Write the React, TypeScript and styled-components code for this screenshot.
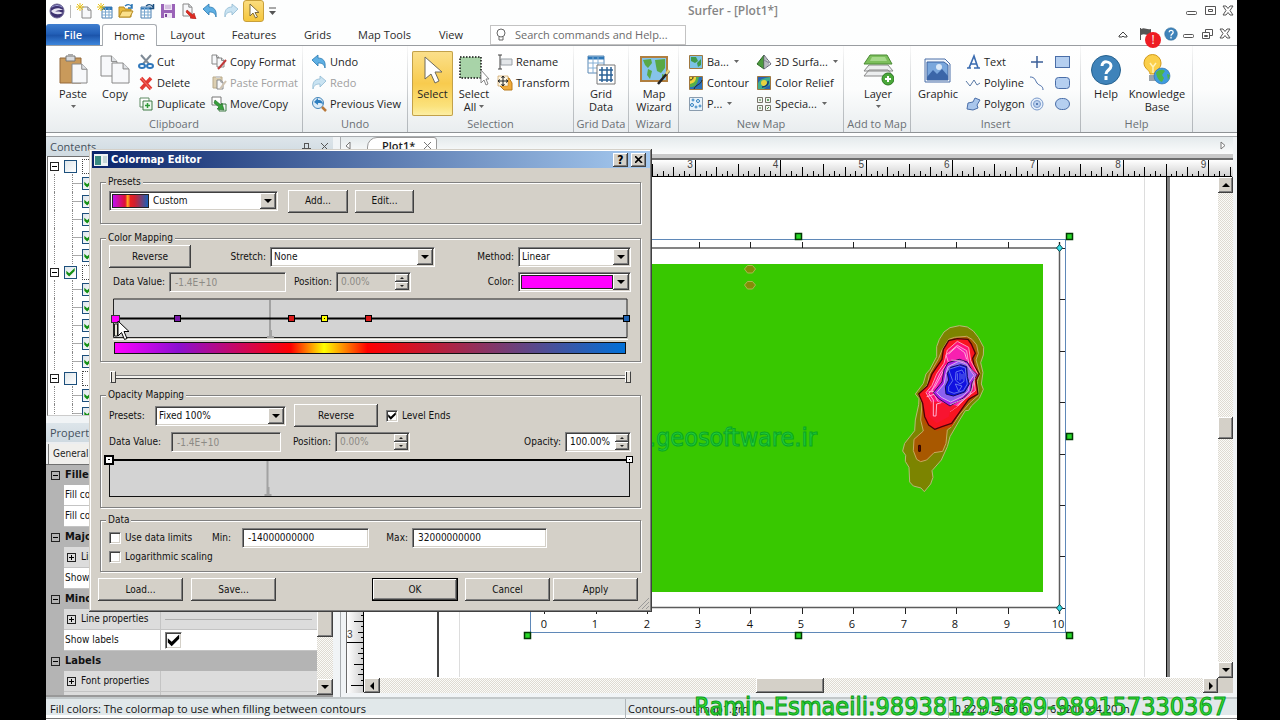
import React from "react";
import styled, { createGlobalStyle, css } from "styled-components";

const UI = '"Open Sans", "Noto Sans", sans-serif';
const DLG = '"DejaVu Sans Condensed", "DejaVu Sans", sans-serif';

const Global = createGlobalStyle`
  * { box-sizing: border-box; }
  html, body { margin: 0; background: #000; }
  body { font: 11px/14px ${UI}; color: #1e1e1e; overflow-x: hidden; }
  button, input, select { font: inherit; color: inherit; margin: 0; padding: 0; border: 0; background: none; border-radius: 0; outline: 0; }
  svg { display: block; flex: none; }
`;

/* ---------- window shell ---------- */
const Screen = styled.div`
  position: relative;
  min-height: 100vh;
  padding: 0 43px 0 46px;
  background: #000;
  display: flex;
  overflow: hidden;
`;
const Window = styled.main`
  flex: 1;
  min-width: 0;
  display: flex;
  flex-direction: column;
  background: #fdfefe;
`;
const TitleBar = styled.header`
  height: 22px;
  display: grid;
  grid-template-columns: 1fr auto 1fr;
  align-items: center;
  padding: 0 1px 0 0;
`;
const QuickBar = styled.div`
  display: flex;
  align-items: center;
`;
const QuickButton = styled.button<{ $on?: boolean }>`
  width: 21px;
  height: 22px;
  display: grid;
  place-items: center;
  ${(p) => p.$on && css`background: linear-gradient(#fbdc7e, #f5c63c); border: 1px solid #c9a03a; border-radius: 3px; margin-left: 2px;`}
`;
const Divider = styled.span`
  width: 1px;
  height: 13px;
  background: #b8b8b8;
  margin: 0 2px 0 3px;
`;
const Title = styled.h1`
  margin: 0 0 0 184px;
  font-size: 12px;
  font-weight: 600;
  color: #858585;
  line-height: 22px;
`;
const Controls = styled.div`
  display: flex;
  justify-content: flex-end;
  align-items: center;
  gap: 2px;
`;
const GlyphButton = styled.button`
  width: 16px;
  height: 18px;
  display: grid;
  place-items: center;
`;
const TabRow = styled.nav`
  height: 24px;
  display: flex;
  align-items: flex-end;
  border-bottom: 1px solid #9a9da1;
`;
const FileTab = styled.button`
  width: 54px;
  height: 21px;
  background: linear-gradient(#3f7fd0, #2360b8 45%, #1c55ab 55%, #3d86dc);
  border-radius: 3px 3px 0 0;
  color: #fff;
  font-weight: 600;
`;
const Tab = styled.button<{ $on?: boolean; $w: number }>`
  width: ${(p) => p.$w}px;
  height: 21px;
  color: #2a2a2a;
  ${(p) => p.$on && css`background: #fff; border: 1px solid #a9adb2; border-bottom: 0; border-radius: 3px 3px 0 0; height: 22px; margin: 0 0 -1px 2px;`}
`;
const SearchBox = styled.label`
  width: 196px;
  height: 20px;
  margin-left: 12px;
  display: flex;
  align-items: center;
  gap: 8px;
  padding-left: 4px;
  border: 1px solid #c3c3c3;
  background: #fff;
  input { width: 160px; color: #6b6b6b; }
  input::placeholder { color: #6b6b6b; opacity: 1; }
`;
const TabControls = styled(Controls)`
  flex: 1;
  height: 22px;
  padding-right: 4px;
`;
const FlagWrap = styled.span`
  position: relative;
  width: 28px;
  height: 18px;
  padding: 2px 0 0 6px;
`;
const Alert = styled.span`
  position: absolute;
  left: 12px;
  top: 7px;
  width: 16px;
  height: 16px;
  border-radius: 8px;
  background: #ee1c23;
  color: #fff;
  text-align: center;
  font-size: 12px;
  line-height: 16px;
  z-index: 2;
`;

/* ---------- ribbon ---------- */
const Ribbon = styled.section`
  height: 87px;
  display: flex;
  background: linear-gradient(#fff 0%, #fcfdfd 50%, #e9edef 100%);
  border-bottom: 1px solid #8f9396;
`;
const Group = styled.div<{ $w: number }>`
  width: ${(p) => p.$w}px;
  flex: none;
  display: flex;
  flex-direction: column;
  padding-top: 5px;
  border-right: 1px solid;
  border-image: linear-gradient(#fafafa, #c4c8cb 60%, #b0b5b9) 1;
`;
const GroupBody = styled.div<{ $pad?: number }>`
  height: 65px;
  display: flex;
  padding-left: ${(p) => p.$pad ?? 4}px;
`;
const GroupName = styled.div`
  text-align: center;
  line-height: 16px;
  color: #6a6f74;
  white-space: nowrap;
`;
const BigButton = styled.button<{ $w: number; $on?: boolean }>`
  width: ${(p) => p.$w}px;
  flex: none;
  height: 65px;
  display: flex;
  flex-direction: column;
  align-items: center;
  padding-top: 3px;
  line-height: 13px;
  svg.big { margin-bottom: 1px; }
  ${(p) => p.$on && css`background: linear-gradient(#fbe08c, #f8cb4e 50%, #fbe27c 85%, #fdf0a8); box-shadow: inset 0 0 0 1px #c2a14a; border-radius: 2px;`}
`;
const BigLabel = styled.span`
  display: flex;
  align-items: center;
  justify-content: center;
  gap: 3px;
  white-space: nowrap;
  min-height: 13px;
`;
const Stack = styled.div<{ $w: number; $pad?: number }>`
  width: ${(p) => p.$w}px;
  flex: none;
  display: flex;
  flex-direction: column;
  padding-left: ${(p) => p.$pad ?? 0}px;
`;
const SmallButton = styled.button<{ $off?: boolean }>`
  height: 21px;
  display: flex;
  align-items: center;
  gap: 3px;
  white-space: nowrap;
  color: ${(p) => (p.$off ? "#a0a0a0" : "#1e1e1e")};
  svg.caret { margin-left: 2px; }
`;

/* ---------- body ---------- */
const Body = styled.div`
  flex: 1;
  display: flex;
  gap: 7px;
  margin-top: 3px;
  border-top: 1px solid #a9adb0;
  background: #f1f4f6;
`;
const Dock = styled.aside`
  width: 287px;
  flex: none;
  display: flex;
  flex-direction: column;
`;
const DockHeader = styled.h2`
  margin: 0;
  height: 19px;
  flex: none;
  padding: 0 4px;
  display: flex;
  align-items: center;
  gap: 10px;
  font-size: 11px;
  font-weight: 400;
  color: #45505c;
  background: linear-gradient(#dde5ea, #cfdae1);
  span { flex: 1; }
`;
const Tree = styled.ul`
  flex: 1 0 200px;
  height: 200px;
  margin: 0 0 7px 1px;
  padding: 1px 0 0;
  list-style: none;
  background: #fff;
  border: 1px solid #707070;
  border-bottom-color: #ccc;
  overflow: hidden;
`;
const Parent = styled.li`
  height: 16px;
  display: flex;
  align-items: center;
  padding-left: 2px;
  gap: 5px;
`;
const Child = styled.li`
  height: 18px;
  display: flex;
  align-items: center;
  margin-left: 6px;
  padding-left: 17px;
  border-left: 1px dotted #888;
`;
const Branch = styled.span`
  width: 10px;
  height: 18px;
  border-left: 1px dotted #888;
  background: linear-gradient(#aaa, #aaa) 0 9px / 100% 1px no-repeat;
`;
const Expander = styled.button<{ $plus?: boolean }>`
  width: 9px;
  height: 9px;
  flex: none;
  border: 1px solid #222;
  background:
    linear-gradient(#000, #000) center / 5px 1px no-repeat,
    ${(p) => (p.$plus ? "linear-gradient(#000,#000) center / 1px 5px no-repeat," : "")}
    linear-gradient(transparent, transparent);
`;
const check = css`
  &:checked::after {
    content: "";
    display: block;
    width: 100%;
    height: 100%;
    background: currentColor;
    clip-path: polygon(12% 38%, 38% 62%, 88% 14%, 88% 42%, 38% 92%, 12% 66%);
  }
`;
const TreeCheck = styled.input`
  appearance: none;
  width: 13px;
  height: 13px;
  flex: none;
  border: 1px solid #1c4f7c;
  background: linear-gradient(135deg, #dfe6ea, #fff);
  color: #159015;
  ${check}
`;
const TreeName = styled.span`
  border: 1px dotted #444;
  height: 15px;
  line-height: 12px;
  padding: 0 10px;
  font-family: ${DLG};
  font-size: 10px;
`;
const PropTabs = styled.div`
  height: 22px;
  flex: none;
  display: flex;
  padding: 2px 0 0 2px;
  background: #eceef0;
  font: 10px/18px ${DLG};
  button { padding: 0 4px; background: #f0efec; border-left: 1px solid #777; border-right: 1px solid #777; }
`;
const PropFrame = styled.div`
  display: flex;
  flex: none;
  height: 233px;
  border-top: 1px solid #707070;
  border-bottom: 2px solid #999;
  font: 10px/14px ${DLG};
  color: #111;
`;
const PropGrid = styled.div`
  flex: 1;
  overflow: hidden;
  background: #b4b4b4;
`;
const PropHead = styled.div`
  height: 20px;
  display: flex;
  align-items: center;
  gap: 5px;
  padding-left: 5px;
  font-weight: 700;
  font-size: 11px;
`;
const PropRow = styled.div<{ $sub?: boolean }>`
  height: 21px;
  margin-left: 18px;
  display: grid;
  grid-template-columns: 97px 1fr;
  background: ${(p) => (p.$sub ? "#dcdcdc" : "#fff")};
  border-bottom: 1px solid #c4c4c4;
`;
const PropName = styled.label<{ $sub?: boolean }>`
  display: flex;
  align-items: center;
  gap: 5px;
  padding-left: ${(p) => (p.$sub ? 3 : 1)}px;
  border-right: 1px solid #c4c4c4;
  white-space: nowrap;
`;
const PropValue = styled.div`
  display: flex;
  align-items: center;
  padding-left: 4px;
  hr { width: 97%; margin: 0; border: 0; border-top: 1px solid #b0b0b0; }
`;
const dither = css`background: repeating-conic-gradient(#dedad2 0 25%, #fbfbf8 0 50%) 0 0 / 2px 2px;`;
const raised = css`
  background: #d4d0c8;
  box-shadow: inset -1px -1px #404040, inset 1px 1px #fff, inset -2px -2px #808080;
`;
const ScrollV = styled.div`
  width: 16px;
  flex: none;
  display: flex;
  flex-direction: column;
  ${dither}
`;
const CanvasScrollV = styled(ScrollV)`
  width: 15px;
`;
const ScrollH = styled.div`
  height: 15px;
  display: flex;
  ${dither}
`;
const Spacer = styled.span<{ $n: number }>`
  flex: ${(p) => p.$n} 1 0;
`;
const ScrollButton = styled.button<{ $w?: number; $h?: number }>`
  width: ${(p) => p.$w ?? 16}px;
  height: ${(p) => p.$h ?? 16}px;
  flex: none;
  display: grid;
  place-items: center;
  ${raised}
`;

/* ---------- document ---------- */
const Doc = styled.section`
  flex: 1;
  min-width: 0;
  display: flex;
  flex-direction: column;
  padding-right: 4px;
  border-left: 1px solid #a9adb0;
`;
const DocTabs = styled.div`
  height: 17px;
  display: flex;
  align-items: center;
  justify-content: space-between;
  padding: 0 6px 0 4px;
  background: linear-gradient(#e4eaec, #fbfcfc);
`;
const DocTab = styled.button`
  height: 17px;
  width: 70px;
  margin-left: 16px;
  padding: 0 5px 0 14px;
  display: flex;
  align-items: center;
  justify-content: space-between;
  border: 1px solid #999;
  border-radius: 10px 3px 0 0;
  background: #fff;
  font-weight: 600;
  line-height: 17px;
`;
const TabSide = styled.div`
  display: flex;
  align-items: center;
`;
const Canvas = styled.div`
  flex: 1;
  display: grid;
  grid-template-columns: 17px minmax(0, 1fr) 15px;
  grid-template-rows: 17px minmax(0, 1fr) 15px;
  margin: 4px 0 4px 5px;
  border-top: 2px solid #6c6c6c;
  border-left: 1px solid #6c6c6c;
  box-shadow: 0 -4px #c9c9c9;
`;
const Clip = styled.div<{ $wide?: boolean }>`
  overflow: hidden;
  background: #fff;
  ${(p) => p.$wide && css`grid-column: 2 / 4; background: linear-gradient(#fff, #cfcfcf);`}
`;
const VRuler = styled.div`
  grid-row: 2 / 4;
  overflow: hidden;
  background: linear-gradient(90deg, #fff, #cfcfcf);
`;
const Corner = styled.span`
  background: #d4d0c8;
`;

/* ---------- status ---------- */
const Status = styled.footer`
  height: 23px;
  flex: none;
  display: flex;
  border-top: 2px solid #c2c8ca;
  border-bottom: 1px solid #fff;
  box-shadow: inset 0 -1px #777, inset 0 -4px #fff;
  background: #e1e8ea;
  font-size: 11px;
  line-height: 19px;
  padding: 0 4px;
  color: #111;
`;
const Pane = styled.span<{ $w?: number }>`
  ${(p) => (p.$w ? css`width: ${p.$w}px; border-left: 1px solid #b0b6ba; padding-left: 2px;` : css`flex: 1;`)}
  white-space: nowrap;
`;
const Caption = styled.p`
  position: absolute;
  right: 53px;
  bottom: 0;
  margin: 0;
  font: 25px/26px ${DLG};
  color: #35e135;
  -webkit-text-stroke: 1px #0c9a1c;
  white-space: nowrap;
  z-index: 5;
`;

/* ---------- dialog ---------- */
const Dialog = styled.section`
  position: absolute;
  left: 89px;
  top: 149px;
  width: 563px;
  padding: 2px;
  background: #d4d0c8;
  box-shadow: inset -1px -1px #404040, inset 1px 1px #d4d0c8, inset -2px -2px #808080, inset 2px 2px #fff;
  font: 10px/14px ${DLG};
  color: #111;
  z-index: 4;
`;
const DialogTitle = styled.header`
  height: 17px;
  margin: 0 0 0 1px;
  display: flex;
  align-items: center;
  gap: 3px;
  padding: 0 4px 0 2px;
  background: linear-gradient(90deg, #0a246a, #a6caf0);
  color: #fff;
  h2 { flex: 1; margin: 0; font-size: 11px; font-weight: 700; }
`;
const CaptionButton = styled.button`
  width: 15px;
  height: 14px;
  color: #000;
  font-weight: 700;
  font-size: 12px;
  line-height: 14px;
  display: grid;
  place-items: center;
  ${raised}
`;
const DialogBody = styled.div`
  display: flex;
  flex-direction: column;
  padding: 7px 9px 0 9px;
`;
const Box = styled.fieldset<{ $h: number; $mt?: number }>`
  min-width: 0;
  margin: ${(p) => p.$mt ?? 0}px 0 0;
  height: ${(p) => p.$h}px;
  padding: 0 9px 0 8px;
  border: 1px solid #808080;
  box-shadow: 1px 1px #fff, inset 1px 1px #fff;
  legend { margin: 0 0 0 -3px; padding: 0 2px; height: 14px; background: #d4d0c8; }
`;
const Row = styled.div<{ $cols: string; $h: number }>`
  display: grid;
  grid-template-columns: ${(p) => p.$cols};
  height: ${(p) => p.$h}px;
  align-items: center;
  white-space: nowrap;
`;
const Right = styled.label`
  text-align: right;
  padding-right: 4px;
`;
const PushButton = styled.button<{ $main?: boolean; $w?: number }>`
  height: 23px;
  width: ${(p) => (p.$w ? `${p.$w}px` : "auto")};
  ${raised}
  ${(p) => p.$main && css`box-shadow: inset 0 0 0 1px #000, inset -2px -2px #404040, inset 2px 2px #fff, inset -3px -3px #808080;`}
`;
const sunken = css`
  border: 1px solid;
  border-color: #808080 #fff #fff #808080;
  box-shadow: inset 1px 1px #404040, inset -1px -1px #d4d0c8;
`;
const Combo = styled.span`
  height: 20px;
  display: flex;
  align-items: center;
  padding: 1px;
  background: #fff;
  ${sunken}
  select { appearance: none; flex: 1; min-width: 0; height: 14px; line-height: 14px; padding-left: 2px; }
`;
const Drop = styled.span`
  width: 16px;
  height: 16px;
  display: grid;
  place-items: center;
  ${raised}
`;
const Swatch = styled.span<{ $w?: number; $bg: string }>`
  height: 14px;
  border: 1px solid #222;
  margin-left: 1px;
  background: ${(p) => p.$bg};
  ${(p) => (p.$w ? css`width: ${p.$w}px; margin-right: 2px;` : css`flex: 1;`)}
`;
const Field = styled.input`
  width: 100%;
  height: 20px;
  padding: 0 5px;
  background: #fff;
  ${sunken}
  &:disabled { background: #d4d0c8; color: #8c8a85; }
`;
const Spin = styled.span<{ $off?: boolean }>`
  height: 20px;
  display: flex;
  align-items: center;
  padding: 1px;
  background: ${(p) => (p.$off ? "#d4d0c8" : "#fff")};
  color: ${(p) => (p.$off ? "#8c8a85" : "#111")};
  ${sunken}
  input { flex: 1; min-width: 0; padding-left: 3px; }
`;
const SpinButtons = styled.span`
  display: flex;
  flex-direction: column;
  button { width: 14px; height: 8px; display: grid; place-items: center; ${raised} }
`;
const CheckLabel = styled.label`
  display: flex;
  align-items: center;
  gap: 4px;
`;
const Tick = styled.input`
  appearance: none;
  width: 12px;
  height: 12px;
  background: #fff;
  color: #000;
  ${sunken}
  ${check}
`;
const BigTick = styled(Tick)`
  width: 17px;
  height: 17px;
`;
const Slider = styled.div`
  height: 12px;
  margin: 9px 10px 0 10px;
  display: flex;
  align-items: center;
  i { width: 6px; height: 12px; border: 1px solid #fff; border-right-color: #404040; border-bottom-color: #404040; background: linear-gradient(90deg, #333 1px, #e4e0d8 1px); }
  span { flex: 1; height: 4px; border-top: 1px solid #808080; border-bottom: 1px solid #404040; background: #f4f2ee; }
`;
const Footer = styled.div`
  display: flex;
  margin: 6px 3px 0 -2px;
  padding-bottom: 9px;
`;
const Fill = styled.span<{ $w?: number }>`
  ${(p) => (p.$w ? css`width: ${p.$w}px;` : css`flex: 1;`)}
`;
const Grip = styled.svg`
  position: absolute;
  right: 3px;
  bottom: 3px;
`;
const Pointer = styled.svg`
  position: absolute;
  left: 28px;
  top: 171px;
`;

/* ---------- icons ---------- */
const Svg = ({ s = 16, big, children }: { s?: number; big?: boolean; children: React.ReactNode }) => (
  <svg className={big ? "big" : undefined} width={big ? 32 : s} height={big ? 32 : s} viewBox={big ? "0 0 32 32" : "0 0 16 16"} fill="none">
    {children}
  </svg>
);
const Caret = () => (
  <svg className="caret" width="5" height="3" viewBox="0 0 5 3"><path d="M0 0h5L2.500 3z" fill="#666" /></svg>
);
const MenuCaret = () => (
  <svg width="7" height="8" viewBox="0 0 7 8"><path d="M0 1h7" stroke="#555" /><path d="M0 4h7L3.500 8z" fill="#555" /></svg>
);
const Arrow = ({ d, off }: { d: "up" | "down" | "left" | "right"; off?: boolean }) => (
  <svg width="8" height="8" viewBox="0 0 8 8">
    <path fill={off ? "#808080" : "#000"} d={{ up: "M0 6l4-4 4 4z", down: "M0 2h8l-4 4z", left: "M6 0v8L2 4z", right: "M2 0l4 4-4 4z" }[d]} />
  </svg>
);
const Tiny = ({ up }: { up?: boolean }) => (
  <svg width="4" height="2" viewBox="0 0 4 2"><path d={up ? "M0 2l2-2 2 2z" : "M0 0h4L2 2z"} fill="#222" /></svg>
);
const Sheet = ({ x, y, w, h }: { x: number; y: number; w: number; h: number }) => {
  const f = w * 0.35;
  return (
    <>
      <path d={`M${x} ${y}h${w - f}l${f} ${f}v${h - f}h${-w}z`} fill="#f7f8fa" stroke="#888" />
      <path d={`M${x + w - f} ${y}v${f}h${f}`} stroke="#888" fill="#dfe2e6" />
    </>
  );
};
const Spark = () => <path d="M4 0v8M0 4h8M1 1l6 6M7 1L1 7" stroke="#e8c21c" />;
const undoPath = "M1 6l6-5v3c5 0 8 3 7 10-1-4-3-5-7-5v3z";

const IcLogo = () => <Svg><circle cx="8" cy="8" r="7" fill="#3d3270" stroke="#6d6796" /><path d="M2 8c3-3 8-4 12-1-3 0-6 0-8 2 3-1 6 0 8 1-4 2-9 2-12-2z" fill="#e6e4f2" /><path d="M3 4c3-2 7-2 10 0" stroke="#9ea0d8" /></Svg>;
const IcNew = () => <Svg><Sheet x={6} y={4} w={9} h={11} /><Spark /></Svg>;
const IcGridPaper = () => <Svg><path d="M5 4h10v11H5z" fill="#fff" stroke="#4b7fb0" /><path d="M5 5.500h10" stroke="#2f78b8" strokeWidth="3" /><path d="M5 9h10M5 12h10M8.500 5v10M12 5v10" stroke="#7ba9d0" /><Spark /></Svg>;
const IcOpen = () => <Svg><path d="M1 14V4h5l1 2h6v8z" fill="#e9b93a" stroke="#b58a20" /><path d="M1 14l3-6h11l-3 6z" fill="#fbe08a" stroke="#b58a20" /><path d="M7 3c3-2 5-2 7 1M14 1v4h-4" stroke="#2a76b5" strokeWidth="1.500" /></Svg>;
const IcOpenGrid = () => <Svg><path d="M2 4h10v11H2z" fill="#fff" stroke="#4b7fb0" /><path d="M2 5.500h10" stroke="#2f78b8" strokeWidth="2" /><path d="M2 9h10M2 12h10M5.500 5v10M9 5v10" stroke="#7ba9d0" /><path d="M7 3c3-2 5-2 7 1M14.500 1v4.500h-4" stroke="#1b4f80" strokeWidth="1.500" /></Svg>;
const IcSave = () => <Svg><path d="M1 1h14v14H1z" fill="#9a63b8" /><path d="M4 1h8v6H4z" fill="#efe6f4" /><path d="M4 10h8v5H4z" fill="#efe6f4" /><path d="M5 11h2v3H5z" fill="#7a439a" /><path d="M5 3h6M5 5h6" stroke="#b99acb" /></Svg>;
const IcExport = () => <Svg><Sheet x={2} y={1} w={9} h={12} /><path d="M6 7l6 5 1-2 2 6-6-1 1-1-5-5z" fill="#e02a20" stroke="#a81810" strokeWidth=".6" /></Svg>;
const IcUndo = () => <Svg><path d={undoPath} fill="#5fb0e4" stroke="#2a78b0" strokeWidth=".8" /></Svg>;
const IcRedo = () => <Svg><g transform="translate(16 0) scale(-1 1)"><path d={undoPath} fill="#c9e3f2" stroke="#8fb9d2" strokeWidth=".8" /></g></Svg>;
const IcCursor = () => <Svg><path d="M4 1v12l3-3 2.500 5 2-1L9 9.500h4z" fill="#fff" stroke="#7d6a3a" /></Svg>;

const IcPaste = () => <Svg big><path d="M3 4h21v25H3z" fill="#c99a5b" stroke="#94693a" /><path d="M9 2h9v5H9z" fill="#d8dadd" stroke="#777" /><path d="M11 0h5v3h-5z" fill="#aaa" /><Sheet x={15} y={10} w={15} h={19} /></Svg>;
const IcCopy = () => <Svg big><Sheet x={2} y={2} w={16} h={20} /><Sheet x={13} y={9} w={17} h={20} /></Svg>;
const IcCut = () => <Svg><path d="M3 1l8 9M13 1L5 10" stroke="#7e8a96" strokeWidth="2" /><ellipse cx="4" cy="12" rx="3" ry="2" stroke="#2f77bb" strokeWidth="2" /><ellipse cx="12" cy="12" rx="3" ry="2" stroke="#2f77bb" strokeWidth="2" /></Svg>;
const IcDelete = () => <Svg><path d="M3 3l10 11M13 3L3 14" stroke="#e23a34" strokeWidth="3.500" /><path d="M3 3l10 11" stroke="#f37a70" /></Svg>;
const IcDup = () => <Svg><path d="M2 2h9v9H2z" fill="#fff" stroke="#5e8a62" /><path d="M5 5h9v9H5z" fill="#eef7ee" stroke="#3f7a45" /><path d="M9.500 7v5M7 9.500h5" stroke="#2e9a36" strokeWidth="1.500" /></Svg>;
const IcCopyFmt = () => <Svg><Sheet x={1} y={1} w={7} h={9} /><Sheet x={6} y={4} w={7} h={9} /><path d="M15 6l-6 7-2 2" stroke="#c0393a" strokeWidth="2" /></Svg>;
const IcPasteFmt = () => <Svg><path d="M2 2h9v11H2z" fill="#dccfb2" stroke="#b9aa8a" /><path d="M5 1h4v2H5z" fill="#ccc" /><Sheet x={6} y={5} w={6} h={9} /><path d="M15 6l-6 8" stroke="#cfc3b0" strokeWidth="2" /></Svg>;
const IcMove = () => <Svg><path d="M1 1h9v8H1z" fill="#fff" stroke="#777" /><path d="M10 8h5v7H8v-4" stroke="#3f7a45" /><path d="M4 4l6 5 1-2 2 7-7-1 2-2-5-4z" fill="#37a03c" stroke="#1c6a22" strokeWidth=".6" /></Svg>;
const IcPrev = () => <Svg><circle cx="7" cy="7" r="5.500" fill="#dcecf8" stroke="#4585b8" /><path d="M3 6l4-4v2c4 0 5 2 5 5-1-2-2-2-5-2v2z" fill="#2f7fc0" /><path d="M11 11l4 4" stroke="#b9783a" strokeWidth="2.500" /></Svg>;
const IcSelect = () => <Svg big><path d="M8 3v22l6-5 4 9 4-2-4-9h7z" fill="#fff" stroke="#6e6a5c" /></Svg>;
const IcSelectAll = () => <Svg big><path d="M2 3h21v21H2z" fill="#a8d3a8" stroke="#111" strokeWidth="1.500" strokeDasharray="1.500 1.500" /><path d="M23 16v13l3-3 2 5 2-1-2-5h3z" fill="#fff" stroke="#888" /></Svg>;
const IcRename = () => <Svg><path d="M4 5h11v6H4z" fill="#e3e6e9" stroke="#9aa0a6" /><path d="M3 1v14M1 1h4M1 15h4" stroke="#444" /></Svg>;
const IcTransform = () => <Svg><path d="M5 3h7l3 5v7H7l-4-4z" fill="#f1ab3a" stroke="#b87a1c" /><path d="M1 1h10v10H1z" fill="#fdf6e4" stroke="#b87a1c" strokeWidth=".5" /><path d="M6 1v10M1 6h10M4.500 3L6 1l1.500 2M4.500 9L6 11l1.500-2M3 4.500L1 6l2 1.500M9 4.500L11 6 9 7.500" stroke="#222" /></Svg>;
const IcGrid = () => <Svg big><path d="M3 2h16v17H3z" fill="#fff" stroke="#5b88b4" /><path d="M3 4h16" stroke="#2f78b8" strokeWidth="3" /><path d="M3 9h16M3 14h16M8 3v16M13 3v16" stroke="#85b0d6" /><path d="M12 11h18v19H12z" fill="#fff" stroke="#777" /><path d="M14 16h14M14 21h14M14 26h14M17 13v15M22 13v15M26 13v15" stroke="#2b6296" strokeWidth="1.500" /></Svg>;
const IcMapWizard = () => <Svg big><path d="M3 3h26v24H3z" fill="#86c3ea" stroke="#b07f3f" strokeWidth="2" /><path d="M5 6l8-1 1 4-4 5-3-3zM10 15l4 2-2 8-3-4zM17 6l10-1v9l-4 5-4-2-1-5zM24 20l3 1v3h-3z" fill="#58a846" /><path d="M31 17L20 30" stroke="#222" strokeWidth="2.500" /><path d="M31 16l-3 4" stroke="#e8d27a" strokeWidth="2.500" /></Svg>;
const IcBase = () => <Svg><path d="M1.500 1.500h13v13h-13z" fill="#7cc3e6" stroke="#a07840" /><path d="M3 3h5l2 4-3 2-4-2zM9 9l4-4v6l-3 2z" fill="#3f9a4a" /></Svg>;
const IcContour = () => <Svg><path d="M1.500 1.500h13v13h-13z" fill="#2a70b8" stroke="#a07840" /><path d="M2 2h9c-1 4-2 7-4 9-2 1-4 1-5 1z" fill="#53b04b" /><path d="M2 2h6c0 4-2 6-6 7z" fill="#f0d33c" /><path d="M2 5c2 0 3-1 3-3M6 14c2-5 7-4 8-9" stroke="#222" /></Svg>;
const IcPost = () => <Svg><path d="M1.500 1.500h13v13h-13z" fill="#e8f3fb" stroke="#8a9cae" /><g stroke="#2f7fc0"><circle cx="5" cy="4" r="1" /><circle cx="10" cy="5" r="1.500" /><circle cx="4" cy="9" r="1.500" /><circle cx="8" cy="11" r="1" /><circle cx="12" cy="10" r="1" /></g></Svg>;
const IcSurf = () => <Svg><path d="M8 1l-7 9 7 5z" fill="#4d9a3f" stroke="#2c6a24" /><path d="M8 1l7 9-7 5z" fill="#e9eeea" stroke="#667" /><path d="M10 4v9M12 7v5M8 6l5 3" stroke="#889" /></Svg>;
const IcRelief = () => <Svg><path d="M1.500 1.500h13v13h-13z" fill="#2a62b0" stroke="#a07840" /><path d="M2 8c3-5 8-5 12-6v8c-3 1-5 3-6 4H2z" fill="#3fae8c" /><circle cx="8" cy="8" r="3" fill="#e7d240" /><path d="M6 12c3 0 7-2 6-6" stroke="#173a78" strokeWidth="1.500" /></Svg>;
const IcSpecial = () => <Svg><path d="M1.500 1.500h5v5h-5zM9.500 1.500h5v5h-5zM1.500 9.500h5v5h-5zM9.500 9.500h5v5h-5z" fill="#f2f3f0" stroke="#77756a" /><path d="M3 4h2M12 3v2M11 4h2M4 11v2M11 13l2-2" stroke="#3a8a3a" /></Svg>;
const IcLayer = () => <Svg big><path d="M7 16h19l5 6H2zM7 11h19l5 6H2z" fill="#eceeef" stroke="#888" /><path d="M8 1h17l5 9H2z" fill="#7cbf5c" stroke="#4a8a34" /><path d="M10 3h13l2 4H8z" fill="#a6d98c" /><circle cx="26" cy="25" r="6" fill="#4aa83a" stroke="#2d7a22" /><path d="M26 22v6M23 25h6" stroke="#fff" strokeWidth="2" /></Svg>;
const IcGraphic = () => <Svg big><path d="M3 5h20l5 5v18H3z" fill="#f2f6fb" stroke="#4a6ea8" /><path d="M5 8h17l4 3v15H5z" fill="#7aa7dc" stroke="#3b62a0" /><circle cx="17" cy="13" r="3" fill="#dbe9f8" /><path d="M5 23l6-7 4 4 5-5 6 7v4H5z" fill="#3b66a8" /></Svg>;
const IcText = () => <Svg><path d="M2 14h4M9 14h6M4 14L9 2l4 12M6 10h5" stroke="#3b6cb0" strokeWidth="1.600" /></Svg>;
const IcPolyline = () => <Svg><path d="M1 6l4 5 4-6 3 5 3-2" stroke="#5a7aa6" /></Svg>;
const IcPolygon = () => <Svg><path d="M2 13l1-6 5-1 2-4 5 2-3 5 1 3-5 2z" fill="#a9c6ec" stroke="#4a6ea8" /></Svg>;
const IcPlus = () => <Svg><path d="M8 2v12M2 8h12" stroke="#3b5f98" strokeWidth="1.500" /></Svg>;
const IcSpline = () => <Svg><path d="M1 2c5 0 5 3 7 6s6 2 6 7" stroke="#4a6ea8" /></Svg>;
const IcRings = () => <Svg><circle cx="8" cy="8" r="6" fill="#e6effa" stroke="#7a9acb" /><circle cx="8" cy="8" r="3.500" fill="#bcd2ef" stroke="#7a9acb" /><circle cx="8" cy="8" r="1" fill="#3b62a0" /></Svg>;
const IcRect = ({ r }: { r: number }) => <Svg><rect x="1.500" y="2.500" width="14" height="11" rx={r} fill="#b5cff0" stroke="#4a6ea8" /></Svg>;
const IcHelp = ({ big }: { big?: boolean }) => (
  <svg className={big ? "big" : undefined} width={big ? 32 : 14} height={big ? 32 : 14} viewBox="0 0 32 32">
    <circle cx="16" cy="16" r="14.500" fill="#3f83ba" stroke="#27628f" /><path d="M12 12c0-6 9-5 9 0 0 4-5 4-5 8M16 22v4" stroke="#fff" strokeWidth="3" fill="none" />
  </svg>
);
const IcKnow = () => <Svg big><path d="M9 20c0-4-6-5-6-11a8 8 0 0117 0c0 6-5 7-6 11z" fill="#fbcf4a" stroke="#d19a1c" /><path d="M9 9l3 4 3-4M12 13v6" stroke="#fff2b8" strokeWidth="1.500" /><path d="M8 21h8v6H8z" fill="#9aa3ab" /><circle cx="21" cy="22" r="8" fill="#3f9be0" stroke="#2c6ca8" strokeWidth=".6" /><path d="M15 19c2-4 7-4 9-2l-3 4 2 3-2 4c-3-1-5-4-6-9zM26 20l3 1-2 5z" fill="#4fb548" /></Svg>;
const IcMin = () => <svg width="12" height="12" viewBox="0 0 12 12"><rect x=".5" y="6.500" width="10" height="3" rx="1" fill="#fff" stroke="#555" /></svg>;
const IcMax = () => <svg width="12" height="12" viewBox="0 0 12 12" fill="#fff" stroke="#555"><path d="M1.500 1.500h10v8h-10zM4.500 4.500h4v2h-4z" /></svg>;
const IcRest = () => <svg width="12" height="12" viewBox="0 0 12 12" fill="#fff" stroke="#555"><path d="M4.500 1.500h7v6h-7z" /><path d="M1.500 4.500h7v6h-7zM3.500 7.500h3v1h-3z" /></svg>;
const IcX = () => <svg width="12" height="12" viewBox="0 0 12 12"><path d="M1 1h3l2 2.500L8 1h3L8 5.500 11 10H8L6 7.500 4 10H1l3-4.500z" fill="#fff" stroke="#555" /></svg>;
const IcUp = () => <svg width="10" height="8" viewBox="0 0 10 8"><path d="M1 6l4-4 4 4v1H6L5 6 4 7H1z" fill="#fff" stroke="#444" /></svg>;
const IcFlag = () => <svg width="13" height="14" viewBox="0 0 13 14"><path d="M1 1h1v12H1zM2 2c4-2 5 1 10 0v6C8 9 6 6 2 8z" fill="#555" /></svg>;

/* ---------- drawings ---------- */
const INCH = 85.6;
const tickLength = (i: number) => (i % 16 === 0 ? 17 : i % 8 === 0 ? 13 : i % 4 === 0 ? 10 : i % 2 === 0 ? 6 : 3);

const TopRuler = () => (
  <svg width="868" height="17" viewBox="364 160 868 17">
    <g stroke="#000">
      {Array.from({ length: 165 }, (_, i) => i - 2).map((i) => {
        const x = Math.round(438 + (i * INCH) / 16) + 0.5;
        return <path key={i} d={`M${x} 177v-${tickLength(i)}`} />;
      })}
      <path d="M364 176.500h868" />
    </g>
    <g fontFamily="Liberation Sans, sans-serif" fontSize="10" fill="#444" textAnchor="end">
      {[3, 4, 5, 6, 7, 8, 9].map((n) => <text key={n} x={436 + n * INCH} y="168">{n}</text>)}
    </g>
  </svg>
);
const LeftRuler = () => (
  <svg width="17" height="515" viewBox="347 177 17 515">
    <g stroke="#000">
      {Array.from({ length: 97 }, (_, i) => i).map((i) => {
        const y = Math.round(685 - (i * INCH) / 16) + 0.5;
        return <path key={i} d={`M364 ${y}h-${tickLength(i + 8)}`} />;
      })}
      <path d="M363.500 177v516" />
    </g>
    <text x="347" y="638" fontFamily="Liberation Sans, sans-serif" fontSize="10" fill="#444">3</text>
  </svg>
);

const HANDLES = [[798, 236], [1069, 236], [1069, 436], [1069, 635], [798, 635], [527, 635]];
const outer = "M222 306L240 293 268 287 292 291 310 303 325 322 341 352 340 375 332 398 339 428 334 462 340 478 328 505 304 528 296 541 286 542 270 568 240 620 232 650 214 690 186 722 189 742 182 762 163 785 153 774 130 768 119 756 117 712 106 694 107 676 98 663 104 640 134 602 136 570 146 524 147 506 136 492 160 460 168 432 180 418 200 380 200 350 208 328z";
const inner = "M236 328L254 322 290 319 306 328 320 345 325 370 318 390 330 430 322 455 326 495 300 518 268 555 245 590 232 600 228 640 218 664 192 668 170 690 152 695 140 688 130 662 132 628 160 603 152 570 156 520 146 494 172 464 178 434 206 385 216 360z";
const red = "M236 332L262 326 294 328 304 342 316 370 308 385 312 405 328 432 318 450 324 492 296 508 270 545 245 580 216 590 194 598 176 585 164 560 158 520 146 492 172 468 186 432 216 388 220 358z";
const pink = "M232 360L262 334 296 352 302 392 322 430 312 450 316 482 292 500 264 528 240 545 204 530 196 560 186 560 184 515 168 488 186 466 200 432 222 400z";
const violet = "M234 398L268 388 292 396 306 420 322 434 306 458 302 484 280 504 240 528 206 506 190 488 216 456 222 420z";
const blue = "M242 412L272 404 290 410 292 440 298 462 284 486 250 498 228 492 226 470 236 450 232 430z";

const MapView = () => (
  <svg width="852" height="500" viewBox="364 177 852 500">
    <path d="M459.500 177v500M1144.500 177v500" stroke="#ddd" />
    <path d="M438 177v500" stroke="#444" strokeWidth="2" />
    <path d="M1166.500 177v500" stroke="#111" />
    <path d="M1168.500 177v500" stroke="#808080" strokeWidth="3" />
    <rect x="500" y="264" width="543" height="328" fill="#38c800" />
    <g fill="#848c08" stroke="#a8b850">
      <path d="M744.500 269l3-3.500h5l3 3.500-3 4h-5zM744.500 285l3-3.500h5l3 3.500-3 4h-5z" />
    </g>
    <g transform="translate(870 230) scale(.33333)" strokeLinejoin="round" strokeWidth="3">
      <path d={outer} fill="#7c8400" stroke="#b8b878" />
      <path d={inner} fill="#a85800" stroke="#c8a860" />
      <path d="M160 530L270 548 245 590 200 602 165 580z" fill="#c84000" />
      <path d={red} fill="#f81420" stroke="#500008" strokeWidth="4" />
      <path d={pink} fill="#ff1078" stroke="#ff9ab8" />
      <path d="M228 375L262 346 290 362 296 400 236 400zM210 430L186 480 204 515 244 540 300 495 312 450 300 410 228 405z" fill="#f820b0" stroke="#ffa0d0" />
      <path d="M204 515L264 528 240 545 236 560 200 580 178 560 184 515z" fill="#f81430" />
      <path d="M236 372L260 350 284 368 290 388M222 420L196 468 176 490 190 510 190 558 198 558 200 522 214 518M176 485h22M170 500l26-8" stroke="#ffb0d0" fill="none" />
      <path d={violet} fill="#a820e8" stroke="#301050" />
      <path d="M234 410L266 394 290 402 304 425 312 436 298 456 296 482 276 500 242 516 214 502 200 488 222 462 228 430z" fill="#8c60f0" stroke="#e0a8f0" />
      <path d={blue} fill="#1010e0" stroke="#101058" />
      <path d="M236 418L268 408 286 414 288 440 292 462 280 482 252 490 236 484 236 470 248 452 240 430zM258 426l18-6 6 10v24l-12 8-14-12zM256 462l20 6-10 16zM262 430v20M270 428v24M276 432v16" stroke="#8ca0f8" strokeWidth="2" fill="none" />
      <path d="M244 390L280 394 316 432 306 480 286 505 240 524" stroke="#c8a0c8" strokeWidth="3" fill="none" />
      <path d="M146 646h5v18h-5z" fill="#800000" stroke="#200000" />
    </g>
    <g stroke="#5c5c5c">
      <path d="M545 248h515M545 607.500h515M1059.500 242v372" strokeWidth="1.500" />
    </g>
    <g stroke="#222">
      {Array.from({ length: 11 }, (_, i) => {
        const x = Math.round(544 + i * 51.5) + 0.5;
        return <path key={i} d={`M${x} 242v6M${x} 608v6`} />;
      })}
      {Array.from({ length: 8 }, (_, i) => {
        const y = Math.round(248 + i * 51.4) + 0.5;
        return <path key={i} d={`M1060 ${y}h6`} />;
      })}
    </g>
    <rect x="530.500" y="239.500" width="535" height="393" fill="none" stroke="#5f88b8" />
    <g fill="#28d828" stroke="#033803">
      {HANDLES.map(([x, y]) => <rect key={`${x}-${y}`} x={x - 2.5} y={y - 2.5} width="6" height="6" strokeWidth="1.500" />)}
    </g>
    <g fill="#38e0e8" stroke="#084850">
      <path d="M1059.500 244.500l3 3.500-3 3.500-3-3.500zM1059.500 604.500l3 3.500-3 3.500-3-3.500z" />
    </g>
    <g fontFamily="Open Sans, sans-serif" fontSize="11" fill="#111" textAnchor="middle">
      {Array.from({ length: 11 }, (_, i) => <text key={i} x={Math.round(544 + i * 51.4)} y="628">{i}</text>)}
    </g>
    <text x="817" y="446" textAnchor="end" fontFamily="DejaVu Sans Condensed, sans-serif" fontSize="25" fill="#22d03a" stroke="#0aa528">www.geosoftware.ir</text>
  </svg>
);

const ColorRamp = () => (
  <svg width="520" height="60" viewBox="110 296 520 60" style={{ marginLeft: 1 }}>
    <defs>
      <linearGradient id="ramp">
        <stop offset="0" stopColor="#f0f" />
        <stop offset=".125" stopColor="#8c10d0" />
        <stop offset=".345" stopColor="#f00" />
        <stop offset=".41" stopColor="#ff0" />
        <stop offset=".495" stopColor="#f00" />
        <stop offset="1" stopColor="#0070d8" />
      </linearGradient>
    </defs>
    <path d="M113.500 299h513.500v38.500H113.500z" fill="#d3d3d3" stroke="#222" />
    <path d="M113 339.500h515" stroke="#fff" />
    <path d="M269 300h2v30h1v6h2v2h-7v-2h2z" fill="#a2a2a2" />
    <path d="M115 318.500h512" stroke="#000" strokeWidth="2" />
    <rect x="111.500" y="315.500" width="8" height="7" fill="#f0f" stroke="#333" />
    <path d="M114.500 324v12h3v-12z" fill="#e8e6d8" stroke="#222" />
    {[[177, "#7818a8"], [291, "#d81818"], [324, "#ff0"], [368, "#d81818"], [626, "#1c60b0"]].map(([x, c]) => (
      <rect key={x} x={Number(x) - 2.5} y="315.500" width="6" height="6" fill={String(c)} stroke="#000" />
    ))}
    <path d="M324 318h1v1h-1z" fill="#000" />
    <rect x="114.500" y="342.500" width="511" height="11" fill="url(#ramp)" stroke="#111" />
  </svg>
);
const OpacityCurve = () => (
  <svg width="532" height="46" viewBox="104 455 532 46" style={{ marginLeft: -5 }}>
    <rect x="109.500" y="459.500" width="520" height="37" fill="#d3d3d3" stroke="#111" />
    <path d="M266.500 461h2v26h1v7h2v2h-7v-2h2z" fill="#a2a2a2" />
    <path d="M109 460h521" stroke="#000" strokeWidth="2" />
    <rect x="105" y="456" width="8" height="8" fill="#fff" stroke="#000" strokeWidth="2" />
    <path d="M108 459h2v1h-2z" />
    <rect x="626.500" y="456.500" width="6" height="6" fill="#fff" stroke="#000" />
    <path d="M629 459h1v1h-1z" />
  </svg>
);

/* ---------- composed parts ---------- */
const Big = ({ icon, w, on, lines, caret }: { icon: React.ReactNode; w: number; on?: boolean; lines: string[]; caret?: boolean }) => (
  <BigButton $w={w} $on={on}>
    {icon}
    {lines.map((l, i) => <BigLabel key={l}>{l}{caret && i === 1 && <Caret />}</BigLabel>)}
    {caret && lines.length === 1 && <BigLabel><Caret /></BigLabel>}
  </BigButton>
);
const Small = ({ icon, label, off, caret }: { icon: React.ReactNode; label: string; off?: boolean; caret?: boolean }) => (
  <SmallButton $off={off}>{icon}{label}{caret && <Caret />}</SmallButton>
);
const Select = ({ id, value, children }: { id: string; value: string; children?: React.ReactNode }) => (
  <Combo>
    {children}
    <select id={id} defaultValue={value}><option>{value}</option></select>
    <Drop><Arrow d="down" /></Drop>
  </Combo>
);
const Spinner = ({ id, value, off }: { id: string; value: string; off?: boolean }) => (
  <Spin $off={off}>
    <input id={id} defaultValue={value} disabled={off} />
    <SpinButtons>
      <button aria-label="Increase"><Tiny up /></button>
      <button aria-label="Decrease"><Tiny /></button>
    </SpinButtons>
  </Spin>
);
const TreeGroup = ({ name, checked, n }: { name: string; checked?: boolean; n: number }) => (
  <>
    <Parent>
      <Expander aria-label={`Collapse ${name}`} />
      <TreeCheck type="checkbox" aria-label={name} defaultChecked={checked} />
      <TreeName>{name}</TreeName>
    </Parent>
    {Array.from({ length: n }, (_, i) => (
      <Child key={i}><Branch /><TreeCheck type="checkbox" aria-label={`${name} axis ${i + 1}`} defaultChecked /></Child>
    ))}
  </>
);
const Heading = ({ children }: { children: string }) => <PropHead><Expander aria-label={`Collapse ${children}`} />{children}</PropHead>;
const Prop = ({ name, sub, children }: { name: string; sub?: boolean; children?: React.ReactNode }) => (
  <PropRow $sub={sub}>
    <PropName $sub={sub}>{sub && <Expander $plus aria-label={`Expand ${name}`} />}{name}</PropName>
    <PropValue>{children}</PropValue>
  </PropRow>
);

const ColormapDialog = () => (
  <Dialog role="dialog" aria-label="Colormap Editor">
    <DialogTitle>
      <svg width="14" height="12" viewBox="0 0 14 12"><path d="M0 0h14v12H0z" fill="#eef3f3" /><path d="M1 2h6v9H1z" fill="#3a8a80" /><path d="M9 2h4v7H9z" fill="#c8d8d8" /></svg>
      <h2>Colormap Editor</h2>
      <CaptionButton>?</CaptionButton>
      <CaptionButton aria-label="Close"><svg width="8" height="7" viewBox="0 0 8 7"><path d="M0 0l7 7M7 0L0 7" stroke="#000" strokeWidth="1.600" /></svg></CaptionButton>
    </DialogTitle>
    <DialogBody>
      <Box $h={49}>
        <legend>Presets</legend>
        <Row $h={24} $cols="169px 10px 60px 7px 59px">
          <Select id="preset" value="Custom"><Swatch $w={37} $bg="linear-gradient(90deg,#c010f0,#e01030 35%,#ffb020 42%,#e82020 50%,#d02030 62%,#1860b8)" /></Select>
          <span /><PushButton>Add...</PushButton><span /><PushButton>Edit...</PushButton>
        </Row>
      </Box>
      <Box $h={131} $mt={7}>
        <legend>Color Mapping</legend>
        <Row $h={23} $cols="82px 79px 165px 1fr 113px">
          <PushButton>Reverse</PushButton>
          <Right htmlFor="stretch">Stretch:</Right><Select id="stretch" value="None" />
          <Right htmlFor="method">Method:</Right><Select id="method" value="Linear" />
        </Row>
        <Row $h={28} $cols="60px 117px 50px 75px 1fr 113px">
          <Right htmlFor="cval">Data Value:</Right><Field id="cval" defaultValue="-1.4E+10" disabled />
          <Right htmlFor="cpos">Position:</Right><Spinner id="cpos" value="0.00%" off />
          <Right as="span">Color:</Right>
          <Combo><Swatch $bg="#f0f" /><Drop><Arrow d="down" /></Drop></Combo>
        </Row>
        <ColorRamp />
      </Box>
      <Slider><i /><span /><i /></Slider>
      <Box $h={120} $mt={5}>
        <legend>Opacity Mapping</legend>
        <Row $h={27} $cols="46px 131px 8px 84px 8px 1fr">
          <label htmlFor="opreset">Presets:</label><Select id="opreset" value="Fixed 100%" />
          <span /><PushButton>Reverse</PushButton><span />
          <CheckLabel><Tick type="checkbox" defaultChecked />Level Ends</CheckLabel>
        </Row>
        <Row $h={26} $cols="62px 110px 54px 75px 1fr 66px">
          <label htmlFor="oval">Data Value:</label><Field id="oval" defaultValue="-1.4E+10" disabled />
          <Right htmlFor="opos">Position:</Right><Spinner id="opos" value="0.00%" off />
          <Right htmlFor="opacity">Opacity:</Right><Spinner id="opacity" value="100.00%" />
        </Row>
        <OpacityCurve />
      </Box>
      <Box $h={59} $mt={5}>
        <legend>Data</legend>
        <Row $h={21} $cols="103px 30px 127px 43px 135px">
          <CheckLabel><Tick type="checkbox" />Use data limits</CheckLabel>
          <label htmlFor="min">Min:</label><Field id="min" defaultValue="-14000000000" />
          <Right htmlFor="max">Max:</Right><Field id="max" defaultValue="32000000000" />
        </Row>
        <Row $h={17} $cols="1fr"><CheckLabel><Tick type="checkbox" />Logarithmic scaling</CheckLabel></Row>
      </Box>
      <Footer>
        <PushButton $w={85}>Load...</PushButton><Fill $w={8} />
        <PushButton $w={85}>Save...</PushButton><Fill />
        <PushButton $w={86} $main>OK</PushButton><Fill $w={7} />
        <PushButton $w={85}>Cancel</PushButton><Fill $w={3} />
        <PushButton $w={85}>Apply</PushButton>
      </Footer>
    </DialogBody>
    <Grip width="11" height="11" viewBox="0 0 11 11"><path d="M0 11L11 0M4 11l7-7M8 11l3-3" stroke="#999" /></Grip>
    <Pointer width="13" height="21" viewBox="0 0 13 21"><path d="M1 1v15l3.500-3.500 3 7 2.500-1-3-7h5z" fill="#fff" stroke="#000" /></Pointer>
  </Dialog>
);

export default function App() {
  return (
    <Screen>
      <Global />
      <Window>
        <TitleBar>
          <QuickBar>
            <QuickButton aria-label="Surfer"><IcLogo /></QuickButton>
            <Divider />
            <QuickButton aria-label="New plot"><IcNew /></QuickButton>
            <QuickButton aria-label="New worksheet"><IcGridPaper /></QuickButton>
            <QuickButton aria-label="Open"><IcOpen /></QuickButton>
            <QuickButton aria-label="Open worksheet"><IcOpenGrid /></QuickButton>
            <QuickButton aria-label="Save"><IcSave /></QuickButton>
            <QuickButton aria-label="Export"><IcExport /></QuickButton>
            <QuickButton aria-label="Undo"><IcUndo /></QuickButton>
            <QuickButton aria-label="Redo"><IcRedo /></QuickButton>
            <QuickButton aria-label="Select" $on><IcCursor /></QuickButton>
            <GlyphButton aria-label="Customize"><MenuCaret /></GlyphButton>
          </QuickBar>
          <Title>Surfer - [Plot1*]</Title>
          <Controls>
            <GlyphButton aria-label="Minimize"><IcMin /></GlyphButton>
            <GlyphButton aria-label="Maximize"><IcMax /></GlyphButton>
            <GlyphButton aria-label="Close"><IcX /></GlyphButton>
          </Controls>
        </TitleBar>
        <TabRow>
          <FileTab>File</FileTab>
          <Tab $on $w={55}>Home</Tab>
          <Tab $w={61}>Layout</Tab>
          <Tab $w={72}>Features</Tab>
          <Tab $w={55}>Grids</Tab>
          <Tab $w={79}>Map Tools</Tab>
          <Tab $w={54}>View</Tab>
          <SearchBox>
            <svg width="12" height="14" viewBox="0 0 12 14" fill="none" stroke="#666"><circle cx="6" cy="5" r="4" /><path d="M4 9v3h4V9" /></svg>
            <input placeholder="Search commands and Help..." aria-label="Search commands and Help" />
          </SearchBox>
          <TabControls>
            <GlyphButton aria-label="Collapse ribbon"><IcUp /></GlyphButton>
            <FlagWrap><IcFlag /><Alert>!</Alert></FlagWrap>
            <GlyphButton aria-label="Help"><IcHelp /></GlyphButton>
            <GlyphButton aria-label="Minimize document"><IcMin /></GlyphButton>
            <GlyphButton aria-label="Restore document"><IcRest /></GlyphButton>
            <GlyphButton aria-label="Close document"><IcX /></GlyphButton>
          </TabControls>
        </TabRow>
        <Ribbon>
          <Group $w={257}>
            <GroupBody $pad={6}>
              <Big icon={<IcPaste />} w={42} lines={["Paste"]} caret />
              <Big icon={<IcCopy />} w={42} lines={["Copy"]} />
              <Stack $w={75} $pad={2}>
                <Small icon={<IcCut />} label="Cut" /><Small icon={<IcDelete />} label="Delete" /><Small icon={<IcDup />} label="Duplicate" />
              </Stack>
              <Stack $w={86}>
                <Small icon={<IcCopyFmt />} label="Copy Format" /><Small icon={<IcPasteFmt />} label="Paste Format" off /><Small icon={<IcMove />} label="Move/Copy" />
              </Stack>
            </GroupBody>
            <GroupName>Clipboard</GroupName>
          </Group>
          <Group $w={105}>
            <GroupBody $pad={8}>
              <Stack $w={90}>
                <Small icon={<IcUndo />} label="Undo" /><Small icon={<IcRedo />} label="Redo" off /><Small icon={<IcPrev />} label="Previous View" />
              </Stack>
            </GroupBody>
            <GroupName>Undo</GroupName>
          </Group>
          <Group $w={166}>
            <GroupBody>
              <Big icon={<IcSelect />} w={41} lines={["Select"]} on />
              <Big icon={<IcSelectAll />} w={42} lines={["Select", "All"]} caret />
              <Stack $w={72} $pad={2}>
                <Small icon={<IcRename />} label="Rename" /><Small icon={<IcTransform />} label="Transform" />
              </Stack>
            </GroupBody>
            <GroupName>Selection</GroupName>
          </Group>
          <Group $w={55}>
            <GroupBody><Big icon={<IcGrid />} w={46} lines={["Grid", "Data"]} /></GroupBody>
            <GroupName>Grid Data</GroupName>
          </Group>
          <Group $w={50}>
            <GroupBody $pad={2}><Big icon={<IcMapWizard />} w={46} lines={["Map", "Wizard"]} /></GroupBody>
            <GroupName>Wizard</GroupName>
          </Group>
          <Group $w={165}>
            <GroupBody $pad={9}>
              <Stack $w={68}>
                <Small icon={<IcBase />} label="Ba..." caret /><Small icon={<IcContour />} label="Contour" /><Small icon={<IcPost />} label="P..." caret />
              </Stack>
              <Stack $w={86}>
                <Small icon={<IcSurf />} label="3D Surfa..." caret /><Small icon={<IcRelief />} label="Color Relief" /><Small icon={<IcSpecial />} label="Specia..." caret />
              </Stack>
            </GroupBody>
            <GroupName>New Map</GroupName>
          </Group>
          <Group $w={67}>
            <GroupBody><Big icon={<IcLayer />} w={60} lines={["Layer"]} caret /></GroupBody>
            <GroupName>Add to Map</GroupName>
          </Group>
          <Group $w={170}>
            <GroupBody>
              <Big icon={<IcGraphic />} w={46} lines={["Graphic"]} />
              <Stack $w={68} $pad={4}>
                <Small icon={<IcText />} label="Text" /><Small icon={<IcPolyline />} label="Polyline" /><Small icon={<IcPolygon />} label="Polygon" />
              </Stack>
              <Stack $w={25}>
                <SmallButton aria-label="Symbol"><IcPlus /></SmallButton><SmallButton aria-label="Spline"><IcSpline /></SmallButton><SmallButton aria-label="Range ring"><IcRings /></SmallButton>
              </Stack>
              <Stack $w={20}>
                <SmallButton aria-label="Rectangle"><IcRect r={0} /></SmallButton><SmallButton aria-label="Rounded rectangle"><IcRect r={3} /></SmallButton><SmallButton aria-label="Ellipse"><IcRect r={6} /></SmallButton>
              </Stack>
            </GroupBody>
            <GroupName>Insert</GroupName>
          </Group>
          <Group $w={112}>
            <GroupBody>
              <Big icon={<IcHelp big />} w={42} lines={["Help"]} />
              <Big icon={<IcKnow />} w={60} lines={["Knowledge", "Base"]} />
            </GroupBody>
            <GroupName>Help</GroupName>
          </Group>
        </Ribbon>
        <Body>
          <Dock>
            <DockHeader>
              <span>Contents</span>
              <svg width="9" height="10" viewBox="0 0 9 10" fill="none" stroke="#555"><path d="M2.500 1v5M6.500 1v5M2 1.500h5M0 6.500h9M4.500 7v3" /></svg>
              <svg width="8" height="8" viewBox="0 0 8 8" stroke="#555"><path d="M0 0l7 7M7 0L0 7" /></svg>
            </DockHeader>
            <Tree>
              <TreeGroup name="Map" n={5} />
              <TreeGroup name="Map: Contours" n={5} checked />
              <TreeGroup name="Map 2" n={3} />
            </Tree>
            <DockHeader><span>Property Manager</span></DockHeader>
            <PropTabs><button>General</button></PropTabs>
            <PropFrame>
              <PropGrid>
                <Heading>Filled Contours</Heading>
                <Prop name="Fill contours" />
                <Prop name="Fill colors" />
                <Heading>Major Contours</Heading>
                <Prop name="Line properties" sub />
                <Prop name="Show labels" />
                <Heading>Minor Contours</Heading>
                <Prop name="Line properties" sub><hr /></Prop>
                <Prop name="Show labels"><BigTick type="checkbox" aria-label="Show labels" defaultChecked /></Prop>
                <Heading>Labels</Heading>
                <Prop name="Font properties" sub />
                <PropRow $sub><PropName /><PropValue /></PropRow>
              </PropGrid>
              <ScrollV>
                <Spacer $n={8} />
                <ScrollButton $h={60} aria-label="Scroll position" />
                <Spacer $n={3} />
                <ScrollButton aria-label="Scroll down"><Arrow d="down" /></ScrollButton>
              </ScrollV>
            </PropFrame>
          </Dock>
          <Doc>
            <DocTabs>
              <TabSide>
                <svg width="6" height="9" viewBox="0 0 6 9"><path d="M5 1v7L1 5z" fill="#fff" stroke="#777" /></svg>
                <DocTab>Plot1*<svg width="7" height="7" viewBox="0 0 7 7" stroke="#777"><path d="M0 0l7 7M7 0L0 7" /></svg></DocTab>
              </TabSide>
              <svg width="7" height="9" viewBox="0 0 7 9"><path d="M1 1v7l4-3.500z" fill="#fff" stroke="#777" /></svg>
            </DocTabs>
            <Canvas>
              <Corner />
              <Clip $wide><TopRuler /></Clip>
              <VRuler><LeftRuler /></VRuler>
              <Clip><MapView /></Clip>
              <CanvasScrollV>
                <ScrollButton $w={15} aria-label="Scroll up"><Arrow d="up" /></ScrollButton>
                <Spacer $n={223} />
                <ScrollButton $w={15} $h={22} aria-label="Vertical position" />
                <Spacer $n={223} />
                <ScrollButton $w={15} aria-label="Scroll down"><Arrow d="down" /></ScrollButton>
              </CanvasScrollV>
              <ScrollH>
                <ScrollButton $h={15} aria-label="Scroll left"><Arrow d="left" /></ScrollButton>
                <Spacer $n={375} />
                <ScrollButton $w={68} $h={15} aria-label="Horizontal position" />
                <Spacer $n={378} />
                <ScrollButton $w={15} $h={15} aria-label="Scroll right"><Arrow d="right" /></ScrollButton>
              </ScrollH>
              <Corner />
            </Canvas>
          </Doc>
        </Body>
        <Status>
          <Pane>Fill colors: The colormap to use when filling between contours</Pane>
          <Pane $w={323}>Contours-out-map1.grd</Pane>
          <Pane $w={99}>-0.82 in, 4.03 in</Pane>
          <Pane $w={186}>6.02 in x 4.20 in</Pane>
        </Status>
      </Window>
      <ColormapDialog />
      <Caption>Ramin-Esmaeili:989381295869-989157330367</Caption>
    </Screen>
  );
}
